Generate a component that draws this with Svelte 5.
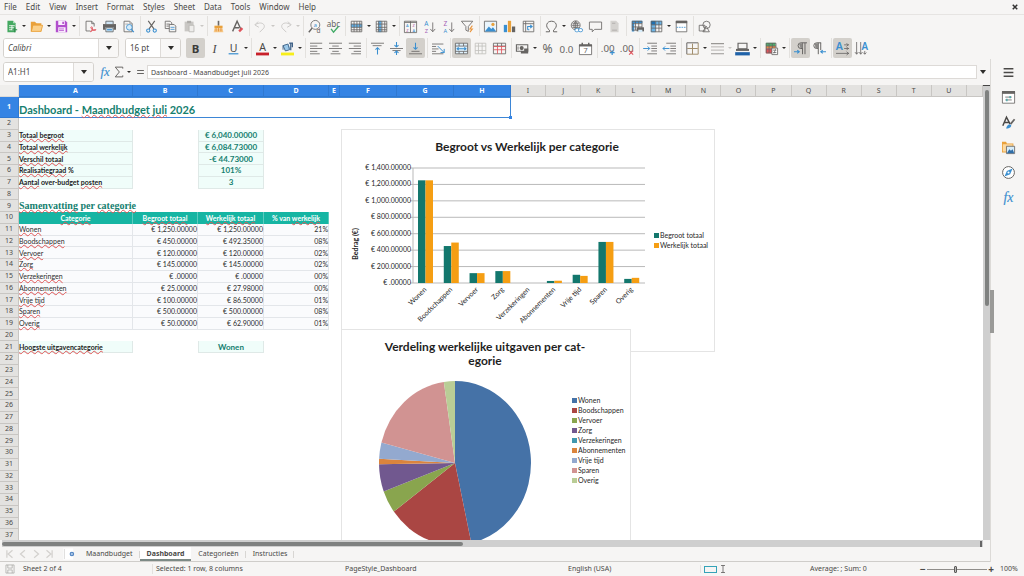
<script>
  const menus = ['File', 'Edit', 'View', 'Insert', 'Format', 'Styles', 'Sheet', 'Data', 'Tools', 'Window', 'Help'];

  const G = '#666462';
  const B = '#3a8fd0';
  const R = '#e0525a';
  const line = (d, c = G, w = 1) => `<path d="${d}" fill="none" stroke="${c}" stroke-width="${w}"/>`;
  const fill = (d, c = G) => `<path d="${d}" fill="${c}"/>`;
  const glyph = (t, x, y, s, c = G, extra = '') =>
    `<text x="${x}" y="${y}" font-size="${s}" fill="${c}" text-anchor="middle" font-family="Noto Sans, sans-serif" ${extra}>${t}</text>`;

  const icons = {
    new: fill('M3 1h7l3 3v11H3z', '#43a860') + fill('M10 1v3h3z', '#b9e2c4') + line('M5 7h7M5 9.500h7M5 12h7M8.500 6.500v6', '#fff') + line('M12 9v6M9 12h6', '#2f8d4c', 1.5),
    open: fill('M1 2h5l2 2h6v10H1z', '#e9a13b') + fill('M4 6h12l-2 8H2z', '#fbd08a') + line('M3.500 6.500h12l-2 7.500H1.500z', '#e9a13b'),
    save: fill('M1 1h12l2 2v12H1z', '#b24fcd') + fill('M4 1h8v5H4zM4 9h9v6H4z', '#fbeefe') + line('M5 11h6M5 13h6', '#b24fcd') + fill('M9 2h2v3H9z', '#b24fcd'),
    pdf: line('M12.500 8V4.500l-3-3h-7v12H8') + line('M9.500 1.500v3h3') + `<path d="M8 14.500c3-2 3-7 1-6s2 5 5 4-3-1-6 2z" fill="none" stroke="${R}" stroke-width="1.200"/>`,
    print: fill('M0 5h16v7H0z') + fill('M3 1h10v4H3z', '#cfe4f4') + fill('M3 9h10v6H3z', '#d7ebf8') + line('M3.500 1.500h9v3.500M3.500 1.500v3.500M3.500 9.500h9v5h-9z') + line('M5 12h6', B, 1.5),
    preview: line('M2.500 1.500h7l3 3v10h-10z') + line('M9.500 1.500v3h3M4 5h4', '#999') + `<circle cx="9" cy="9" r="3.500" fill="#d6ecfa" stroke="${B}"/>` + line('M11.500 11.500l3 3.500', B, 1.5),
    cut: line('M4 1l7 10M12 1L5 11', G, 1.4) + `<circle cx="4" cy="13" r="2" fill="none" stroke="${B}" stroke-width="1.300"/><circle cx="12" cy="13" r="2" fill="none" stroke="${B}" stroke-width="1.300"/>`,
    copy: line('M1.500 1.500h6l2 2v7h-8zM3 5h4M3 7.500h3') + `<path d="M6.500 5.500h6l2 2v7h-8z" fill="#f5f4f2" stroke="${G}"/>` + line('M8 9h5M8 11.500h5', B),
    paste: fill('M2 2h11v12H2z', '#c9c7c4') + fill('M5 1h5v3H5z', '#aeaca9') + `<path d="M7.500 6.500h6v8h-6z" fill="#eeedeb" stroke="#b8b6b3"/>`,
    clone: fill('M7 1h2v6H7z', '#6a6967') + fill('M3 7h10v3H3z', '#e9a13b') + fill('M3 10h10l1 5H2z', '#f6c887') + line('M5 10v4M8 10v4M11 10v4', '#e08a32'),
    clear: line('M2 14L7.500 1.500L12 11M4 9.500h6', G, 1.7) + `<path d="M9 13l4-4 2 2-4 4z" fill="${R}"/>`,
    undo: line('M5 2L1 6l5 3M1.500 6C8 1 15 5 12 10l-5 5', '#cccac7', 1.2),
    redo: line('M11 2l4 4-5 3M14.500 6C8 1 1 5 4 10l5 5', '#cccac7', 1.2),
    find: `<circle cx="9" cy="6" r="5.500" fill="none" stroke="${G}"/>` + line('M5 10L1 15', G, 1.8) + glyph('a', 9, 8, 7, B) + glyph('d', 13, 16, 8),
    spell: glyph('abc', 8, 8, 10) + line('M5 11l3 4 6-7', '#42ab67', 1.7),
    row: fill('M1 5h14v4H1z', '#62b1e8') + line('M1.500 1.500h13v13h-13zM1.500 5h13M1.500 9h13M1.500 12h13M5 1.500v13M8.500 1.500v13M12 1.500v13'),
    col: fill('M4 1h4v14H4z', '#62b1e8') + line('M1.500 1.500h13v13h-13zM1.500 5h13M1.500 9h13M1.500 12h13M4.500 1.500v13M8.500 1.500v13M12 1.500v13'),
    sort: line('M.500 1.500h15v14H.500zM8 1.500v14M.500 3h15', G) + glyph('A', 4.2, 8, 5, B) + glyph('Z', 4.2, 15, 5, '#b04fa5') + glyph('Z', 12, 8, 5, '#b04fa5') + glyph('A', 12, 15, 5, B),
    asc: glyph('A', 4, 7, 8, B) + glyph('Z', 4, 16, 7, '#a45fb5') + line('M12 3v11M9 11l3 3.500 3-3.500'),
    desc: glyph('Z', 4, 7, 8, '#a45fb5') + glyph('A', 4, 16, 7, B) + line('M12 3v11M9 11l3 3.500 3-3.500'),
    filter: line('M.500 1.500h14L9 8v6l-3-1.500V8z') + line('M14 7l-3 4h3l-3 4', '#e9943b', 1.3),
    image: `<path d="M.500 1.500h15v13H.500z" fill="#eaf5fc" stroke="${G}"/>` + fill('M1 14l5-6 3 3 2-2 4 5z', B) + `<circle cx="11" cy="5.500" r="2" fill="#e9a13b"/>`,
    chart: fill('M1 6h4v9H1z', B) + fill('M6 1h4v14H6z', '#e9a13b') + fill('M11 8h4v7h-4z'),
    pivot: line('M1.500 1.500h13v13h-13zM1.500 4.500h13M4.500 1.500v13') + line('M7 12V8h5M10 6l2.500 2L10 10M9 12H7', B, 1.3),
    omega: line('M1 14.500h4.500v-2C-.500 8 2 1.500 8 1.500s8.500 6.500 2.500 11v2H15', G, 1.2),
    link: `<circle cx="7" cy="6.500" r="5.500" fill="none" stroke="${G}"/>` + line('M2 6.500h10M7 1.500v10M3 4h8M3 9h8M7 1.500C4 4 4 9 7 11.500M7 1.500c3 2.500 3 7.500 0 10') + `<rect x="6" y="10.500" width="5" height="4" rx="2" fill="#fff" stroke="${B}"/><rect x="10.500" y="10.500" width="5" height="4" rx="2" fill="#fff" stroke="${B}"/>`,
    comment: line('M.500 2.500h15v9H7l-3 3v-3H.500z'),
    header: fill('M3 1h7l3 3v11H3z', '#d5d3d0') + line('M5 12.500h6M5 4h4', '#aaa8a5'),
    printarea: fill('M1 1h13v3H1zM1 4h3v10H1z', B) + line('M1.500 1.500h12v11h-12zM1.500 4.500h12M1.500 8.500h12M5.500 1.500v11M9.500 1.500v11') + fill('M7 9h9v5H7z') + fill('M9 12h5v3H9z', '#d6ecfa'),
    freeze: fill('M1 1h6v5H1z', '#1f6faf') + fill('M7 1h8v5H7zM1 6h6v9H1z', '#6cb4e6') + line('M1.500 1.500h13v13h-13zM1.500 6h13M1.500 10h13M7 1.500v13M11 1.500v13'),
    window: `<path d="M1.500 1.500h13v13h-13z" fill="#fff" stroke="${G}"/>` + fill('M1 1h14v3H1z') + `<path d="M2 9h12" stroke="${B}" stroke-dasharray="2 1"/>`,
    shapes: line('M1.500 6.500h7v7h-7z') + `<circle cx="10.500" cy="6" r="4.500" fill="none" stroke="${G}"/>` + line('M6 14.500l4-7 4 7z'),
    bold: glyph('B', 8, 13, 14, '#3c3b39', 'font-weight="700"'),
    italic: `<text x="8" y="13" font-size="15" fill="#4a4947" text-anchor="middle" font-style="italic" font-family="Liberation Serif, serif">I</text>`,
    underline: glyph('U', 8, 12, 13, '#4a4947') + line('M2 14.500h12', B, 1.5),
    fontcolor: glyph('A', 8, 11, 13, '#4a4947') + fill('M0 13h16v3.500H0z', '#c8202a'),
    highlight: fill('M0 13h16v3.500H0z', '#f7ee1a') + fill('M2 4l7-2 3 7-7 2z', '#9cc9ea') + line('M2.500 4.500l6-2 2 7-5 1.500zM2.500 4.500v5', '#496a8c', 1.2) + line('M12 2v8M10 1.500h4v5', '#3c5f86', 1.5),
    left: line('M0 1.500h15M0 5h9M0 8h15M0 11.500h9M0 14.500h12'),
    center: line('M0 1.500h16M4 5h8M0 8h16M4 11.500h8M2 14.500h12'),
    right: line('M1 1.500h15M7 5h9M1 8h15M7 11.500h9M4 14.500h12'),
    top: line('M0 1.500h16M2 4.500h11') + line('M8 15.500V7M5.500 9.500L8 7l2.500 2.500', B, 1.3),
    middle: line('M0 8h16M3 10.500h10') + line('M8 0v6M5.500 4L8 6l2.500-2M8 16v-5M5.500 13.500L8 11l2.500 2.500', B, 1.3),
    bottom: line('M0 14.500h16M3 11.500h10') + line('M8 1v8M5.500 6.500L8 9l2.500-2.500', B, 1.3),
    wrap: line('M0 2.500h14M0 5.500h5M0 8.500h8M0 11.500h5M0 14.500h14') + line('M7 5l8 8M15 8.500V13h-4.500', B, 1.2),
    merge: `<path d="M.500 1.500h15v13H.500z" fill="#dff0fb" stroke="${G}"/>` + line('M.500 5h15M.500 11.500h15M5 1.500V5M10.500 1.500V5M5 11.500v3M10.500 11.500v3') + line('M2 8.300h12M4.500 6.500L2.500 8.300l2 1.800M11.500 6.500l2 1.800-2 1.800', B, 1.3),
    mergegrey: line('M1.500 1.500h13v13h-13zM1.500 5h13M1.500 10.500h13M5.500 1.500v13M10 1.500v13', '#c2c0bd'),
    split: line('M.500 1.500h15v13H.500zM.500 5h15M5.500 1.500V5M10.500 1.500V5') + line('M.500 9.500h15M5.500 5.500v9M10.500 5.500v9M.500 5.500h15', R),
    currency: line('M.500 3.500h14v8H.500z', G, 1.3) + `<circle cx="7" cy="7.500" r="2.500" fill="${G}"/>` + fill('M10 8h5v6h-5zM6 11h4v3H6z') + line('M2.500 5.500v4', G),
    percent: glyph('%', 8, 13, 15),
    decimal: glyph('0.0', 8, 13, 12),
    date: `<path d="M.500 3.500h15v12H.500z" fill="#fff" stroke="${G}"/>` + fill('M0 3h16v2.500H0z') + line('M4 1v3M12 1v3', G, 1.8) + glyph('7', 8, 14, 9),
    adddec: glyph('.00', 7, 12, 12) + line('M12.500 10v6M9.500 13h6', B, 1.4),
    deldec: glyph('.00', 7, 12, 12) + line('M10 10.500l5 5M15 10.500l-5 5', R, 1.3),
    indent: line('M4 1.500h12M9 5h7M9 8h7M9 11h7M4 14.500h12') + line('M-1 8h8M4.500 5.500L7 8l-2.500 2.500', B, 1.2),
    outdent: line('M4 1.500h12M9 5h7M9 8h7M9 11h7M4 14.500h12') + line('M0 8h8M2.500 5.500L0 8l2.500 2.500', B, 1.2),
    border: line('M1 15V1h14', G, 1.2) + line('M1 15h14V1M8 2v13M1.500 8h13', '#a08c6a', 1.2),
    style: line('M0 2h16M0 14.500h16', '#9a9895', 1.4) + line('M0 6h16M0 10h16', '#b5b3b0', 1.2),
    bordercolor: `<path d="M2.500 1.500h11v7h-11z" fill="none" stroke="${G}" stroke-width="1.400"/>` + fill('M0 8.500h16V11H0z', G) + fill('M-1 12.500h18v4H-1z', '#1f62a8'),
    cond: fill('M1 1h12v4H1z', '#4cae6b') + fill('M1 5h12v3H1z', '#e98b45') + fill('M1 8h8v6H1z', '#e0525a') + line('M1.500 1.500h12v12h-12zM5 1.500v12M9 1.500v12M1.500 5h12M1.500 8.500h12') + `<path d="M8.500 7.500h7v8h-7z" fill="#fff" stroke="${G}"/>` + line('M10 10h4M10 13h4M13 9l-2 5'),
    ltr: line('M16 1H8.500a3.500 3.500 0 000 7H10M10.500 1v14M13.500 1v14', G, 1.2) + fill('M6 1.500h4.500v6H8z', '#8a8886') + line('M0 12h6M4 10l2.500 2L4 14', B, 1.3),
    rtl: line('M10 1H4.500a3.500 3.500 0 000 7H6M6.500 1v14M9.500 1v9', G, 1.2) + fill('M2 1.500h4.500v6H3z', '#8a8886') + line('M16 12h-6M12 10l-2.500 2 2.500 2', B, 1.3),
    horiz: glyph('A', 4, 10, 13, B, 'font-weight="600"') + line('M10 3.500h6M10 8h6M0 14h16M13 1.500l2 2-2 2M13 6l2 2-2 2M13 12l2.500 2-2.500 2', G),
    vert: glyph('A', 12, 10, 12, B, 'font-weight="600"') + line('M2 0v15M7 0v15M12 11v4M0 12.500L2 15l2-2.500M5 12.500L7 15l2-2.500M10 13l2 2 2-2', G),
    props: `<path d="M.500 1h15v14H.500z" fill="#fff" stroke="${G}"/>` + fill('M0 0h16v3.500H0z') + line('M4 7.500h8M4 11h8', G) + line('M10 6v3M6 9.500v3', '#35a3a3', 1.5),
    styles: line('M1 12L5.500 1.500 10 10M2.500 8h6', '#4a4947', 1.8) + line('M15.500 4l-5 6', G, 2.2) + fill('M5 15.500c1-3 2-5.500 5-5s1 5-5 5z', B),
    gallery: fill('M0 1h5l1 2h8v11H0z', '#e9a13b') + fill('M1 4h12v9H1z', '#fcd9a0') + `<path d="M5.500 6.500h10v9h-10z" fill="#d6ecfa" stroke="${G}"/>` + fill('M6 15l3-5 2 2 2-2 2 5z', '#2f6ea8'),
    navigator: `<circle cx="8" cy="8" r="7.300" fill="#fff" stroke="${G}" stroke-width="1.200"/>` + fill('M13 3l-3 7-7 3 3-7z', B) + `<circle cx="8" cy="8" r="1.300" fill="#fff"/>`,
    fx: `<text x="8" y="13" font-size="17" fill="${B}" stroke="${B}" stroke-width=".2" text-anchor="middle" font-style="italic" font-family="Liberation Serif, serif">fx</text>`,
    sigma: line('M13 3.500V1.500H3L8.500 8 3 14.500h10v-2', G, 1.3),
    equals: line('M2 5.500h12M2 10.500h12', G, 1.8),
    burger: line('M2 3.500h12M2 8h12M2 12.500h12', '#4a4947', 1.8),
    disk: line('M1.500 1.500h13v13h-13zM4.500 1.500v5h7v-5M4.500 14.500v-5h7v5', '#9c9a97'),
    addsheet: `<path d="M-3 -1h16v18H-3z" fill="#fff"/>` + line('M-1 0v16', '#c8c6c3') + `<circle cx="11" cy="8" r="3.600" fill="#4a7fc0"/>` + line('M11 6v4M9 8h4', '#dbe8f6', 1.2),
    caret: line('M4 1h8M8 1v14M4 15h8', '#4a4947', 1.4)
  };

  // "v" marks a drop-down arrow, "-" marks it disabled, "*" a pressed toggle.
  const bar1 = [
    ['new v', 'open v', 'save v'], ['pdf', 'print', 'preview'], ['cut', 'copy', 'paste -'], ['clone', 'clear'],
    ['undo -', 'redo -'], ['find', 'spell'], ['row v', 'col v'], ['sort', 'asc', 'desc', 'filter'],
    ['image', 'chart', 'pivot'], ['omega v', 'link', 'comment', 'header'], ['printarea', 'freeze v', 'window'], ['shapes']
  ];
  const bar2 = [
    ['bold *', 'italic', 'underline v'], ['fontcolor v', 'highlight v'], ['left', 'center', 'right'], ['top', 'middle', 'bottom *'],
    ['wrap'], ['merge *', 'mergegrey', 'split'], ['currency v', 'percent', 'decimal', 'date'], ['adddec', 'deldec'],
    ['indent', 'outdent'], ['border v', 'style -', 'bordercolor v'], ['cond v'], ['ltr *', 'rtl'], ['horiz *', 'vert']
  ];
  const side = ['props', 'styles', 'gallery', 'navigator', 'fx'];

  const cols = 'ABCDEFGHIJKLMNOPQRSTU'.split('');
  const rows = Array.from({ length: 36 }, (_, i) => i + 2);

  const cells = {
    3: { A: ['Totaal begroot', 'key'], C: ['€ 6,040.00000', 'kpi'] },
    4: { A: ['Totaal werkelijk', 'key'], C: ['€ 6,084.73000', 'kpi'] },
    5: { A: ['Verschil totaal', 'key'], C: ['-€ 44.73000', 'kpi'] },
    6: { A: ['Realisatiegraad', 'key', ' %'], C: ['101%', 'kpi'] },
    7: { A: ['Aantal', 'key', ' over-budget ', 'posten'], C: ['3', 'kpi'] },
    9: { A: ['Samenvatting', 'section', ' per ', 'categorie'] },
    10: { A: ['Categorie', 'head'], B: ['Begroot totaal', 'head'], C: ['Werkelijk totaal', 'head'], D: ['', 'head', '% van ', 'werkelijk'] },
    21: { A: ['Hoogste uitgavencategorie', 'key'], C: ['Wonen', 'kpi'] }
  };
  const budget = [
    ['Wonen', '1,250.00000', '1,250.00000', '21%', 1250, 1250],
    ['Boodschappen', '450.00000', '492.35000', '08%', 450, 492.35],
    ['Vervoer', '120.00000', '120.00000', '02%', 120, 120],
    ['Zorg', '145.00000', '145.00000', '02%', 145, 145],
    ['Verzekeringen', '.00000', '.00000', '00%', 0, 0],
    ['Abonnementen', '25.00000', '27.98000', '00%', 25, 27.98],
    ['Vrije tijd', '100.00000', '86.50000', '01%', 100, 86.5],
    ['Sparen', '500.00000', '500.00000', '08%', 500, 500],
    ['Overig', '50.00000', '62.90000', '01%', 50, 62.9]
  ];
  budget.forEach((b, i) => {
    cells[11 + i] = { A: [b[0], 'name'], B: ['€ ' + b[1], 'num'], C: ['€ ' + b[2], 'num'], D: [b[3], 'num'] };
  });
  const spelled = (kind) => ['key', 'section', 'name', 'head'].includes(kind);

  const ticks = ['.00000', '200.00000', '400.00000', '600.00000', '800.00000', '1,000.00000', '1,200.00000', '1,400.00000'];
  const yOf = (v) => 154 - (v / 1400) * 115;
  const step = 232 / 9;

  const pieColors = ['#4572a7', '#aa4643', '#89a54e', '#71588f', '#4198af', '#db843d', '#93a9cf', '#d19392', '#b9cd96'];
  const total = budget.reduce((s, b) => s + b[5], 0);
  let acc = 0;
  const slices = budget.map((b, i) => {
    const a = (acc / total) * 2 * Math.PI;
    acc += b[5];
    const z = (acc / total) * 2 * Math.PI;
    const pt = (t) => `${(114 + 76 * Math.sin(t)).toFixed(2)} ${(134 - 82 * Math.cos(t)).toFixed(2)}`;
    return { color: pieColors[i], d: `M114 134L${pt(a)}A76 82 0 ${z - a > Math.PI ? 1 : 0} 1 ${pt(z)}Z` };
  });
</script>

{#snippet icon(name)}
  <svg class="icon" viewBox="0 0 16 16" aria-hidden="true">{@html icons[name]}</svg>
{/snippet}

{#snippet group(items)}
  <div class="group">
    {#each items as item}
      {@const [name, flag] = item.split(' ')}
      <button class="tool" class:on={flag === '*'} aria-label={name}>{@render icon(name)}</button>
      {#if flag === 'v' || flag === '-'}
        <button class="drop" class:off={flag === '-'} aria-label={name + ' options'}></button>
      {/if}
    {/each}
  </div>
{/snippet}

<div class="app">
  <header>
    <nav class="menu">
      {#each menus as m}<button>{m}</button>{/each}
      <button class="close" aria-label="Close">
        <svg viewBox="0 0 8 8" aria-hidden="true"><path d="M1 1l6 6M7 1L1 7" stroke="#333" stroke-width="2" /></svg>
      </button>
    </nav>
    <div class="bar">{#each bar1 as g}{@render group(g)}{/each}</div>
    <div class="bar second">
      <div class="combo font"><input aria-label="Font name" value="Calibri" /><button aria-label="Font list"></button></div>
      <div class="combo size"><input aria-label="Font size" value="16 pt" /><button aria-label="Size list"></button></div>
      {#each bar2 as g}{@render group(g)}{/each}
    </div>
  </header>

  <div class="main">
    <div class="work">
      <div class="formula">
        <div class="combo ref"><input aria-label="Name box" value="A1:H1" /><button aria-label="Named ranges"></button></div>
        <button class="mini" aria-label="Function wizard">{@render icon('fx')}</button>
        <button class="mini" aria-label="Sum">{@render icon('sigma')}</button>
        <button class="drop" aria-label="Sum options"></button>
        <button class="mini eq" aria-label="Formula">{@render icon('equals')}</button>
        <input class="entry" aria-label="Input line" value="Dashboard - Maandbudget juli 2026" />
        <button class="expand" aria-label="Expand input line"></button>
      </div>

      <div class="gridwrap">
        <div class="sheet">
          <table>
            <colgroup>
              <col class="w-row" /><col class="w-a" /><col class="w-b" /><col class="w-c" /><col class="w-b" /><col class="w-e" />
              <col class="w-f" /><col class="w-f" /><col class="w-f" />
              {#each cols.slice(8) as c}<col />{/each}
              <col class="w-end" />
            </colgroup>
            <thead>
              <tr>
                <th class="corner"></th>
                {#each cols as c, i}<th scope="col" class:sel={i < 8}>{c}</th>{/each}
                <th></th>
              </tr>
            </thead>
            <tbody>
              <tr class="title">
                <th scope="row" class="sel">1</th>
                <td colspan="8">Dashboard - <span class="sp">Maandbudget</span> <span class="sp">juli</span> 2026<i class="handle"></i></td>
                <td colspan="14"></td>
              </tr>
              {#each rows as r}
                <tr>
                  <th scope="row">{r}</th>
                  {#each ['A', 'B', 'C', 'D'] as c}
                    {@const v = cells[r]?.[c]}
                    {#if v}
                      <td class={v[1]}><span class:sp={spelled(v[1]) && v[0]}>{v[0]}</span>{v[2] ?? ''}{#if v[3]}<span class="sp">{v[3]}</span>{/if}</td>
                    {:else}
                      <td></td>
                    {/if}
                  {/each}
                  <td colspan="18"></td>
                </tr>
              {/each}
            </tbody>
          </table>

          <svg class="chart bars" viewBox="0 0 374 223" role="img" aria-label="Begroot vs Werkelijk per categorie">
            <rect x="0.5" y="0.5" width="373" height="222" fill="#fff" stroke="#e4e4e4" />
            <text class="ctitle" x="186" y="22">Begroot vs Werkelijk per categorie</text>
            {#each ticks as t, i}
              <line x1="69" x2="304" y1={yOf(i * 200)} y2={yOf(i * 200)} stroke="#b9b9b9" />
              <text class="end" x="70" y={yOf(i * 200) + 2}>€ {t}</text>
            {/each}
            <line x1="72" x2="72" y1="39" y2="154" stroke="#b9b9b9" />
            {#each budget as b, i}
              <rect x={77 + i * step} y={yOf(b[4])} width="7.5" height={154 - yOf(b[4])} fill="#13776d" />
              <rect x={84.5 + i * step} y={yOf(b[5])} width="7.5" height={154 - yOf(b[5])} fill="#f59e13" />
              <text class="end" transform="translate({86 + i * step} 161) rotate(-45)">{b[0]}</text>
            {/each}
            <text class="axis" transform="translate(17 115) rotate(-90)">Bedrag (€)</text>
            <rect x="313" y="104" width="5" height="5" fill="#13776d" /><text x="319" y="109">Begroot totaal</text>
            <rect x="313" y="114" width="5" height="5" fill="#f59e13" /><text x="319" y="119">Werkelijk totaal</text>
          </svg>

          <svg class="chart pie" viewBox="0 0 290 230" role="img" aria-label="Verdeling werkelijke uitgaven per categorie">
            <rect x="0.5" y="0.5" width="289" height="229" fill="#fff" stroke="#e4e4e4" />
            <text class="ctitle" x="144" y="22">Verdeling werkelijke uitgaven per cat-</text>
            <text class="ctitle" x="144" y="36">egorie</text>
            {#each slices as s}<path d={s.d} fill={s.color} />{/each}
            {#each budget as b, i}
              <rect x="231" y={69 + i * 10} width="5" height="5" fill={pieColors[i]} />
              <text x="237" y={74 + i * 10}>{b[0]}</text>
            {/each}
          </svg>
        </div>
        <div class="vscroll"><i></i></div>
      </div>
      <div class="hscroll"><i></i><b></b></div>

      <div class="tabs">
        <div class="navs">
          {#each ['M3 2v12M12 2L5 8l7 6', 'M11 2L4 8l7 6', 'M5 2l7 6-7 6', 'M13 2v12M4 2l7 6-7 6'] as d}
            <button aria-label="Scroll sheets"><svg class="icon" viewBox="0 0 16 16" aria-hidden="true"><path {d} fill="none" stroke="#d3d1ce" stroke-width="2" /></svg></button>
          {/each}
        </div>
        <button class="add" aria-label="Add sheet">{@render icon('addsheet')}</button>
        {#each ['Maandbudget', 'Dashboard', 'Categorieën', 'Instructies'] as t}
          <button class="tab" class:active={t === 'Dashboard'}>{t}</button>
        {/each}
      </div>
    </div>

    <aside>
      <button aria-label="Sidebar settings">{@render icon('burger')}</button>
      {#each side as s}<button aria-label={s}>{@render icon(s)}</button>{/each}
      <button class="grip" aria-label="Hide sidebar"></button>
    </aside>
  </div>

  <footer>
    <span class="disk">{@render icon('disk')}</span>
    <span>Sheet 2 of 4</span>
    <span class="sep">Selected: 1 row, 8 columns</span>
    <span>PageStyle_Dashboard</span>
    <span>English (USA)</span>
    <span class="mode sep"><i></i>{@render icon('caret')}</span>
    <span>Average: ; Sum: 0</span>
    <span class="zoom"><button aria-label="Zoom out">−</button><input type="range" aria-label="Zoom" min="0" max="100" value="48" /><button aria-label="Zoom in">+</button></span>
    <span>100%</span>
  </footer>
</div>

<style>
  :global(body) { margin: 0; }
  .app {
    height: 100vh; display: flex; flex-direction: column; overflow: hidden;
    background: #f6f5f4; color: #4a4947; font: 7px/10px "Noto Sans", sans-serif;
  }
  button { border: 0; padding: 0; margin: 0; background: none; color: inherit; font: inherit; }
  input { border: 0; padding: 0; margin: 0; min-width: 0; background: #fff; color: inherit; font: inherit; }
  .icon { display: block; width: 15px; height: 15px; overflow: visible; }

  .menu { display: flex; align-items: center; gap: 9px; height: 14px; padding: 0 6px 0 4px; font-size: 8px; border-bottom: 1px solid #e6e4e2; }
  .close { margin-left: auto; }
  .close svg { display: block; width: 6px; height: 6px; }
  .bar { display: flex; align-items: center; height: 22px; padding-left: 2px; }
  .second { padding-left: 3px; }
  .group { display: flex; align-items: center; }
  .group + .group { border-left: 1px solid #e3e1de; padding-left: 1px; margin-left: 2px; }
  .tool { display: grid; place-items: center; width: 19px; height: 20px; border-radius: 2px; }
  .tool .icon { width: 13px; height: 13px; }
  .tool.on { background: #d3d0cb; }
  .drop { width: 6px; height: 10px; display: grid; place-items: center; }
  .drop::before, .combo button::before, .expand::before {
    content: ""; border: 2px solid transparent; border-top-color: #2e2d2b; border-bottom: 0;
  }
  .drop.off::before { border-top-color: #c9c7c4; }
  .combo { display: flex; height: 20px; border: 1px solid #d5d2ce; border-radius: 3px; overflow: hidden; background: #fff; box-sizing: border-box; }
  .combo input { flex: 1; padding-left: 4px; font-size: 8px; }
  .combo button { width: 20px; display: grid; place-items: center; border-left: 1px solid #dedbd8; background: #f8f7f6; }
  .combo button::before, .expand::before { border-width: 4px 3px 0; }
  .font { width: 116px; margin-right: 6px; }
  .font input { font-style: italic; }
  .size { width: 56px; margin-right: 5px; }

  .main { flex: 1; display: flex; min-height: 0; }
  .work { flex: 1; display: flex; flex-direction: column; min-width: 0; }
  .formula { display: flex; align-items: center; height: 26px; padding: 0 1px 0 3px; box-sizing: border-box; }
  .ref { width: 91px; margin-right: 4px; }
  .mini { width: 14px; display: grid; place-items: center; }
  .mini .icon { width: 12px; height: 12px; }
  .eq { margin-left: 1px; }
  .eq .icon { width: 9px; height: 10px; }
  .entry { flex: 1; height: 14px; padding-left: 3px; border: 1px solid #dddad7; box-sizing: border-box; }
  .expand { width: 12px; display: grid; place-items: center; }

  .gridwrap { flex: 1; display: flex; min-height: 0; }
  .sheet { flex: 1; position: relative; overflow: hidden; background: #fff; min-width: 0; }
  table { width: 100%; height: 456px; min-height: 100%; table-layout: fixed; border-spacing: 0; font-family: Lato, sans-serif; color: #2c2c2c; }
  .w-row { width: 19px; } .w-a { width: 114px; } .w-b { width: 65px; } .w-c { width: 66px; }
  .w-e { width: 11px; } .w-f { width: 57px; } .w-end { width: 16px; }
  th, td { padding: 0; line-height: 10px; white-space: nowrap; box-sizing: border-box; }
  th { font: 7px/10px "Noto Sans", sans-serif; background: #e3e2e0; color: #4b4a48; border-right: 1px solid #c8c6c3; border-bottom: 1px solid #c8c6c3; }
  thead tr { height: 12px; }
  th.corner { background: #efeeec; border-color: #dddbd8; }
  th.sel { background: #3584e4; color: #fff; font-weight: 700; border-color: #2f78d0; }
  .title { height: 21px; }
  .title td { font-size: 11px; font-weight: 700; color: #15806f; line-height: 14px; }
  .title td:nth-child(2) { position: relative; border: 1px solid #3d86d6; border-left: 0; padding-top: 4px; }
  .handle { position: absolute; right: -2px; bottom: -2px; width: 3px; height: 3px; background: #3584e4; }
  .sp { text-decoration: underline wavy #e05656 1px; text-underline-offset: 0; text-decoration-skip-ink: none; }
  .key { font-weight: 700; background: #f0fdfa; border: 1px solid #dfe9e7; border-width: 0 1px 1px 0; color: #222; }
  .kpi { font-size: 8px; font-weight: 700; text-align: center; color: #15806f; background: #f0fdfa; border: 1px solid #dfe9e7; border-width: 0 1px 1px; }
  .section { font: 700 10px/10px "Liberation Serif", serif; color: #15806f; }
  .head { background: #16b5a3; color: #fff; font-weight: 700; text-align: center; border-right: 1px solid #5ccbbf; }
  .name, .num { background: #fafbfd; border: 1px solid #e3e6ea; border-width: 0 1px 1px 0; }
  .num { text-align: right; }

  .chart { position: absolute; left: 341px; font: 7px Lato, sans-serif; fill: #1f1f1f; }
  .bars { top: 44px; width: 374px; height: 223px; }
  .pie { top: 244px; width: 290px; height: 230px; }
  .ctitle { font-size: 12px; font-weight: 700; text-anchor: middle; }
  .end { text-anchor: end; }
  .axis { font-weight: 700; text-anchor: middle; }

  .vscroll { width: 7px; background: #cfcfcf; padding-top: 4px; box-sizing: border-box; border-top: 1px solid #444; }
  .vscroll i { display: block; width: 4px; height: 48%; margin-left: 2px; border-radius: 2px; background: #7f8180; }
  .hscroll { height: 7px; margin: 0 7px 0 2px; background: #cfcfcf; display: flex; align-items: center; justify-content: space-between; }
  .hscroll i { width: 47%; height: 4px; border-radius: 2px; background: #7f8180; }
  .hscroll b { width: 2px; height: 6px; background: #666; margin-right: 1px; }

  .tabs { display: flex; height: 15px; border-bottom: 1px solid #cfcdca; box-sizing: border-box; align-items: stretch; }
  .navs { display: flex; align-items: center; padding: 0 6px 0 5px; }
  .navs button { width: 13px; }
  .navs .icon { width: 10px; height: 10px; }
  .add { width: 14px; margin-right: 2px; overflow: hidden; display: grid; place-items: center; }
  .add .icon { width: 10px; height: 10px; }
  .tab { padding: 0 7px; position: relative; background: linear-gradient(#d8d6d3, #d8d6d3) right center / 1px 7px no-repeat; }
  .tab.active { background: #fff; font-weight: 700; box-shadow: inset 0 -2px #7d8a86; }

  aside { width: 34px; box-sizing: border-box; border-left: 1px solid #dcdad7; display: flex; flex-direction: column; align-items: center; gap: 10px; padding-top: 6px; position: relative; padding-left: 2px; }
  aside button { width: 15px; height: 15px; }
  aside .icon { width: 13px; height: 13px; margin: 1px; }
  aside .grip { position: absolute; left: -1px; top: 46%; width: 4px; height: 43px; background: #9a9a98; }

  footer {
    height: 14px; display: grid; align-items: center; white-space: nowrap;
    grid-template-columns:
      minmax(0, 23fr) minmax(0, 133fr) minmax(0, 189fr) minmax(0, 223fr) minmax(0, 136fr)
      minmax(0, 106fr) minmax(0, 109fr) minmax(0, 81fr) minmax(0, 24fr);
  }
  .disk { padding-left: 5px; }
  .disk .icon { width: 10px; height: 10px; }
  .mode { display: flex; align-items: center; gap: 2px; }
  .mode i { width: 11px; height: 5px; border: 1px solid #35a3b8; }
  .mode .icon { width: 8px; height: 8px; }
  .sep { background: linear-gradient(#e3e1de, #e3e1de) left / 1px 100% no-repeat; padding-left: 4px; margin-left: -4px; }
  .zoom { display: flex; align-items: center; padding-right: 5px; }
  .zoom button { width: 8px; font: 700 10px/10px "Noto Sans", sans-serif; }
  .zoom input { flex: 1; appearance: none; width: 0; height: 10px; background: linear-gradient(#8f8d8a, #8f8d8a) center / 100% 1px no-repeat; }
  .zoom input::-webkit-slider-thumb { appearance: none; width: 3px; height: 7px; border-radius: 1px; border: 1px solid #5c5b59; box-sizing: border-box; background: #bbb; }
</style>
